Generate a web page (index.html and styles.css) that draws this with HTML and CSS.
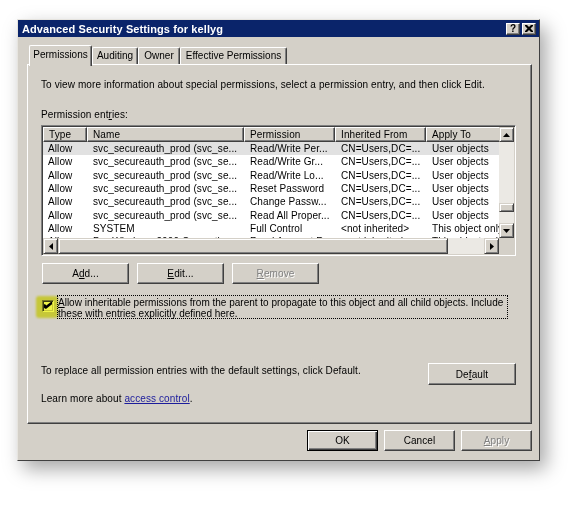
FILE: index.html
```html
<!DOCTYPE html>
<html>
<head>
<meta charset="utf-8">
<title>Advanced Security Settings for kellyg</title>
<link rel="stylesheet" href="styles.css">
</head>
<body>
<div class="dialog">
  <div class="titlebar">
    <span class="title">Advanced Security Settings for kellyg</span>
    <div class="tbtns">
      <span class="tbtn help">?</span>
      <span class="tbtn close"><svg width="8" height="7" viewBox="0 0 8 7"><path d="M0 0h2l2 2 2-2h2v1l-2.5 2.5L8 6v1H6L4 5 2 7H0V6l2.5-2.5L0 1z" fill="#000"/></svg></span>
    </div>
  </div>
  <div class="tabs">
    <div class="tab active">Permissions</div>
    <div class="tab w-aud">Auditing</div>
    <div class="tab w-own">Owner</div>
    <div class="tab w-eff">Effective Permissions</div>
  </div>
  <div class="panel">
    <p class="intro">To view more information about special permissions, select a permission entry, and then click Edit.</p>
    <p class="label">Permission ent<u>r</u>ies:</p>
    <div class="list">
      <div class="view">
        <div class="row head">
          <span class="c c1">Type</span><span class="c c2">Name</span><span class="c c3">Permission</span><span class="c c4">Inherited From</span><span class="c c5">Apply To</span>
        </div>
        <div class="row sel"><span class="c c1">Allow</span><span class="c c2">svc_secureauth_prod (svc_se...</span><span class="c c3">Read/Write Per...</span><span class="c c4">CN=Users,DC=...</span><span class="c c5">User objects</span></div>
        <div class="row"><span class="c c1">Allow</span><span class="c c2">svc_secureauth_prod (svc_se...</span><span class="c c3">Read/Write Gr...</span><span class="c c4">CN=Users,DC=...</span><span class="c c5">User objects</span></div>
        <div class="row"><span class="c c1">Allow</span><span class="c c2">svc_secureauth_prod (svc_se...</span><span class="c c3">Read/Write Lo...</span><span class="c c4">CN=Users,DC=...</span><span class="c c5">User objects</span></div>
        <div class="row"><span class="c c1">Allow</span><span class="c c2">svc_secureauth_prod (svc_se...</span><span class="c c3">Reset Password</span><span class="c c4">CN=Users,DC=...</span><span class="c c5">User objects</span></div>
        <div class="row"><span class="c c1">Allow</span><span class="c c2">svc_secureauth_prod (svc_se...</span><span class="c c3">Change Passw...</span><span class="c c4">CN=Users,DC=...</span><span class="c c5">User objects</span></div>
        <div class="row"><span class="c c1">Allow</span><span class="c c2">svc_secureauth_prod (svc_se...</span><span class="c c3">Read All Proper...</span><span class="c c4">CN=Users,DC=...</span><span class="c c5">User objects</span></div>
        <div class="row"><span class="c c1">Allow</span><span class="c c2">SYSTEM</span><span class="c c3">Full Control</span><span class="c c4">&lt;not inherited&gt;</span><span class="c c5">This object only</span></div>
        <div class="row"><span class="c c1">Allow</span><span class="c c2">Pre-Windows 2000 Compati...</span><span class="c c3">Read Account R...</span><span class="c c4">&lt;not inherited&gt;</span><span class="c c5">This object only</span></div>
      </div>
      <div class="vscroll">
        <span class="sbtn"><svg width="7" height="4" viewBox="0 0 7 4"><path d="M3.5 0L7 4H0z" fill="#000"/></svg></span>
        <div class="vtrack"><span class="vthumb"></span></div>
        <span class="sbtn"><svg width="7" height="4" viewBox="0 0 7 4"><path d="M0 0h7L3.5 4z" fill="#000"/></svg></span>
      </div>
      <div class="hscroll">
        <span class="sbtn"><svg width="4" height="7" viewBox="0 0 4 7"><path d="M4 0v7L0 3.5z" fill="#000"/></svg></span>
        <span class="hthumb"></span>
        <span class="htrack"></span>
        <span class="sbtn"><svg width="4" height="7" viewBox="0 0 4 7"><path d="M0 0l4 3.5L0 7z" fill="#000"/></svg></span>
      </div>
      <div class="corner"></div>
    </div>
    <div class="btnrow">
      <span class="btn">A<u>d</u>d...</span>
      <span class="btn"><u>E</u>dit...</span>
      <span class="btn disabled"><u>R</u>emove</span>
    </div>
    <div class="inherit">
      <span class="marker"></span>
      <span class="check"><svg width="8" height="8" viewBox="0 0 7 7"><path d="M0 2h1l1 1 4-3h1v2L2 6H1L0 5z" fill="#000"/></svg></span>
      <span class="inherit-text"><u>A</u>llow inheritable permissions from the parent to propagate to this object and all child objects. Include these with entries explicitly defined here.</span>
    </div>
    <div class="default-row">
      <span class="default-text">To replace all permission entries with the default settings, click Default.</span>
      <span class="btn">De<u>f</u>ault</span>
    </div>
    <p class="learn">Learn more about <a class="link" href="#">access control</a>.</p>
  </div>
  <div class="footer">
    <span class="btn ok">OK</span>
    <span class="btn">Cancel</span>
    <span class="btn disabled"><u>A</u>pply</span>
  </div>
</div>
</body>
</html>
```

FILE: styles.css
```css
html, body {
  margin: 0;
  padding: 0;
  background: #ffffff;
}
body {
  font-family: "Liberation Sans", Arial, sans-serif;
  font-size: 10px;
  letter-spacing: 0.1px;
  color: #000;
  height: 509px;
  overflow: hidden;
}
.dialog {
  box-sizing: border-box;
  margin: 19px 0 0 17px;
  width: 523px;
  height: 442px;
  background: #d4d0c8;
  border: 1px solid;
  border-color: #e6e4df #404040 #404040 #e6e4df;
  box-shadow: 6px 8px 18px rgba(0, 0, 0, 0.35);
  display: flex;
  flex-direction: column;
}
.titlebar {
  height: 17px;
  background: #0a246a;
  display: flex;
  align-items: center;
  justify-content: space-between;
  padding: 0 3px 0 4px;
}
.title {
  color: #fff;
  font-weight: bold;
  font-size: 11px;
  letter-spacing: 0.1px;
}
.tbtns {
  display: flex;
  gap: 2px;
}
.tbtn {
  box-sizing: border-box;
  width: 14px;
  height: 12px;
  background: #d4d0c8;
  border-top: 1px solid #fff;
  border-left: 1px solid #fff;
  border-right: 1px solid #404040;
  border-bottom: 1px solid #404040;
  box-shadow: inset -1px -1px #808080;
  display: flex;
  align-items: center;
  justify-content: center;
  font-weight: bold;
  font-size: 10px;
  line-height: 10px;
}
.tabs {
  display: flex;
  align-items: flex-end;
  margin: 8px 0 -2px 11px;
  height: 21px;
}
.tab {
  box-sizing: border-box;
  height: 17px;
  margin-bottom: 2px;
  border-top: 1px solid #fff;
  border-left: 1px solid #fff;
  border-right: 1px solid #404040;
  box-shadow: inset -1px 0 #808080;
  border-radius: 2px 2px 0 0;
  text-align: center;
  line-height: 16px;
  letter-spacing: 0;
  background: #d4d0c8;
}
.tab.active {
  width: 63px;
  height: 21px;
  margin-bottom: 0;
  line-height: 18px;
  position: relative;
  z-index: 1;
}
.w-aud { width: 46px; }
.w-own { width: 42px; }
.w-eff { width: 107px; }
.panel {
  box-sizing: border-box;
  margin-left: 9px;
  width: 505px;
  height: 360px;
  border: 1px solid;
  border-color: #fff #404040 #404040 #fff;
  box-shadow: inset -1px -1px #808080;
  padding: 0 15px 0 13px;
}
p {
  margin: 0;
  line-height: 12px;
}
.intro {
  margin-top: 14px;
}
.label {
  margin-top: 18px;
}
.list {
  box-sizing: border-box;
  margin-top: 4px;
  width: 475px;
  height: 131px;
  border: 1px solid;
  border-color: #808080 #fff #fff #808080;
  box-shadow: inset 1px 1px #404040, inset -1px -1px #d4d0c8;
  padding: 1px;
  display: grid;
  grid-template-columns: 456px 15px;
  grid-template-rows: 111px 16px;
  background: #fff;
}
.view {
  overflow: hidden;
  background: #fff;
}
.row {
  display: flex;
  height: 13.33px;
  line-height: 13px;
  white-space: nowrap;
}
.row.head {
  height: 15px;
  line-height: 14px;
}
.row.sel {
  background: #e1e1e1;
}
.c {
  box-sizing: border-box;
  overflow: hidden;
  padding-left: 6px;
  flex: none;
}
.head .c {
  background: #d4d0c8;
  border-top: 1px solid #fff;
  border-left: 1px solid #fff;
  border-right: 1px solid #404040;
  border-bottom: 1px solid #404040;
  box-shadow: inset -1px -1px #808080;
  padding-left: 5px;
}
.c1 { width: 44px; padding-left: 5px; }
.c2 { width: 157px; }
.c3 { width: 91px; }
.c4 { width: 91px; }
.c5 { width: 73px; }
.head .c5 { width: 80px; }
.sbtn {
  box-sizing: border-box;
  width: 15px;
  height: 15px;
  flex: none;
  background: #d4d0c8;
  border-top: 1px solid #d4d0c8;
  border-left: 1px solid #d4d0c8;
  border-right: 1px solid #404040;
  border-bottom: 1px solid #404040;
  box-shadow: inset 1px 1px #fff, inset -1px -1px #808080;
  display: flex;
  align-items: center;
  justify-content: center;
}
.vscroll {
  display: flex;
  flex-direction: column;
  background: #ebe9e4;
}
.vtrack {
  flex: 1;
  display: flex;
  flex-direction: column;
}
.vthumb {
  box-sizing: border-box;
  margin-top: 61px;
  height: 9px;
  background: #d4d0c8;
  border-top: 1px solid #d4d0c8;
  border-left: 1px solid #d4d0c8;
  border-right: 1px solid #404040;
  border-bottom: 1px solid #404040;
  box-shadow: inset 1px 1px #fff, inset -1px -1px #808080;
}
.hscroll {
  display: flex;
  background: #ebe9e4;
  height: 16px;
}
.hscroll .sbtn {
  height: 16px;
}
.hthumb {
  box-sizing: border-box;
  width: 390px;
  background: #d4d0c8;
  border-top: 1px solid #d4d0c8;
  border-left: 1px solid #d4d0c8;
  border-right: 1px solid #404040;
  border-bottom: 1px solid #404040;
  box-shadow: inset 1px 1px #fff, inset -1px -1px #808080;
}
.htrack {
  flex: 1;
}
.corner {
  background: #d4d0c8;
}
.btn {
  box-sizing: border-box;
  display: flex;
  align-items: center;
  justify-content: center;
  height: 21px;
  background: #d4d0c8;
  border-top: 1px solid #fff;
  border-left: 1px solid #fff;
  border-right: 1px solid #404040;
  border-bottom: 1px solid #404040;
  box-shadow: inset -1px -1px #808080;
  flex: none;
}
.btn.disabled {
  color: #808080;
  text-shadow: 1px 1px #fff;
}
.btnrow {
  display: flex;
  gap: 8px;
  margin-top: 7px;
  padding-left: 1px;
}
.btnrow .btn {
  width: 87px;
}
.inherit {
  position: relative;
  display: flex;
  align-items: flex-start;
  margin-top: 11px;
  padding-left: 1px;
}
.check {
  box-sizing: border-box;
  width: 12px;
  height: 12px;
  margin-top: 5px;
  margin-right: 3px;
  background: #fff;
  border: 1px solid;
  border-color: #808080 #fff #fff #808080;
  box-shadow: inset 1px 1px #404040, inset -1px -1px #d4d0c8;
  display: flex;
  align-items: center;
  justify-content: center;
  flex: none;
}
.inherit-text {
  box-sizing: border-box;
  width: 451px;
  height: 24px;
  border: 1px dotted #000;
  padding: 1px 0 0 0;
  line-height: 11px;
  letter-spacing: 0;
}
.marker {
  position: absolute;
  left: -5px;
  top: 1px;
  width: 22px;
  height: 22px;
  background: rgba(236, 242, 40, 0.85);
  mix-blend-mode: multiply;
  border-radius: 3px;
  filter: blur(0.8px);
  z-index: 2;
}
.default-row {
  display: flex;
  justify-content: space-between;
  align-items: flex-start;
  margin-top: 44px;
}
.default-text {
  line-height: 12px;
  padding-top: 2px;
}
.default-row .btn {
  width: 88px;
  height: 22px;
}
.learn {
  margin-top: 8px;
}
.link {
  color: #1c1c9c;
  text-decoration: underline;
}
.footer {
  display: flex;
  justify-content: flex-end;
  gap: 6px;
  padding: 6px 7px 0 0;
}
.footer .btn {
  width: 71px;
}
.btn.ok {
  border: 1px solid #000;
  box-shadow: inset 1px 1px #fff, inset -1px -1px #404040, inset -2px -2px #808080;
}
```
